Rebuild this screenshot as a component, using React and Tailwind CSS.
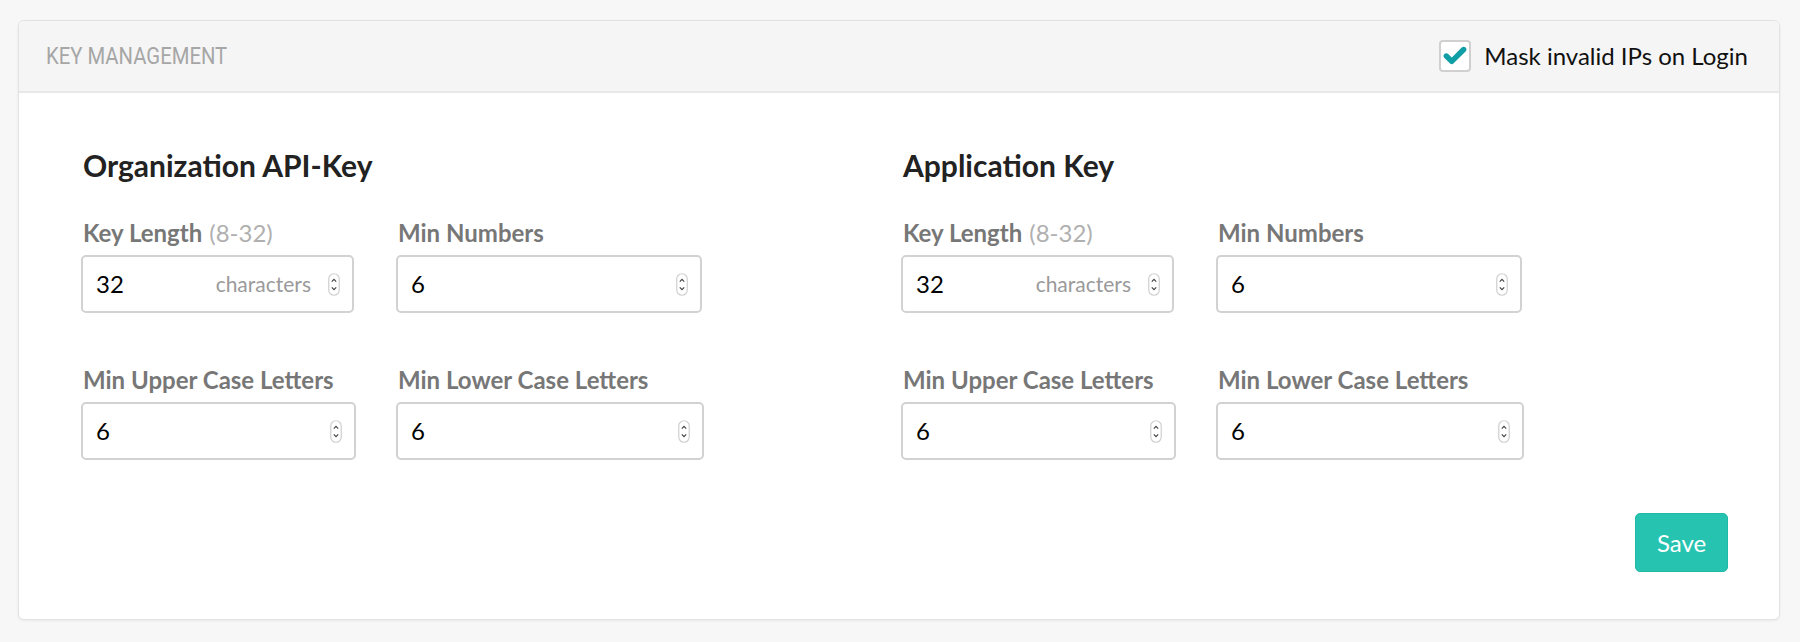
import { Check } from 'lucide-react';

const lato = { fontFamily: 'Lato, "Noto Sans", sans-serif' };

function Spinner() {
  return (
    <svg width="12" height="23" viewBox="0 0 12 23" className="shrink-0">
      <rect x="0.75" y="0.75" width="10.5" height="21.5" rx="5.25" fill="#fff" stroke="#cfcfcf" strokeWidth="1.2" />
      <path d="M3.8 8.6 L6 6.4 L8.2 8.6" fill="none" stroke="#444" strokeWidth="1.2" />
      <path d="M3.8 14.4 L6 16.6 L8.2 14.4" fill="none" stroke="#444" strokeWidth="1.2" />
    </svg>
  );
}

function NumberField({ label, hint, value, unit, width }) {
  return (
    <div className="flex flex-col" style={{ width }}>
      <div className="mb-[9px] h-[26px] pl-[2px] text-[24px] leading-[26px] whitespace-nowrap">
        <span className="font-bold text-[#777]">{label}</span>
        {hint && <span className="ml-[7px] font-normal text-[#b0b0b0]">{hint}</span>}
      </div>
      <div className="flex h-[58px] items-center rounded-[5px] border-2 border-[#d2d2d2] bg-white pl-[13px] pr-[12px]">
        <span className="flex-1 text-[24px] text-black">{value}</span>
        {unit && <span className="mr-[17px] text-[21px] text-[#9a9a9a]">{unit}</span>}
        <Spinner />
      </div>
    </div>
  );
}

function KeySection({ title }) {
  return (
    <div className="w-[820px] shrink-0">
      <h2 className="mb-[38px] h-[34px] pl-[2px] text-[30px] font-bold leading-[34px] text-[#222]">{title}</h2>
      <div className="flex gap-[42px]">
        <NumberField label="Key Length" hint="(8-32)" value="32" unit="characters" width={273} />
        <NumberField label="Min Numbers" value="6" width={306} />
      </div>
      <div className="mt-[54px] flex gap-[40px]">
        <NumberField label="Min Upper Case Letters" value="6" width={275} />
        <NumberField label="Min Lower Case Letters" value="6" width={308} />
      </div>
    </div>
  );
}

export default function App() {
  return (
    <div className="min-h-[642px] bg-[#f7f7f7] pb-[22px] pl-[18px] pr-[20px] pt-[20px]" style={lato}>
      <div className="overflow-hidden rounded-[6px] border border-[#e2e2e2] bg-white shadow-[0_1px_3px_rgba(0,0,0,0.06)]">
        <div className="flex h-[72px] items-center justify-between border-b-2 border-[#e8e8e8] bg-[#f5f5f5] pl-[27px] pr-[31px]">
          <span
            className="origin-left scale-x-[0.845] text-[24px] text-[#a6a6a6]"
            style={{ fontFamily: 'Roboto, sans-serif' }}
          >
            KEY MANAGEMENT
          </span>
          <label className="flex items-center gap-[13px]">
            <span className="flex h-[32px] w-[32px] items-center justify-center rounded-[4px] border-2 border-[#d0d0d0] bg-white">
              <Check className="h-[26px] w-[26px] text-[#109ea6]" strokeWidth={5} />
            </span>
            <span className="text-[24px] text-[#111]">Mask invalid IPs on Login</span>
          </label>
        </div>

        <div className="flex pb-[19px] pl-[62px] pt-[55px]">
          <KeySection title="Organization API-Key" />
          <KeySection title="Application Key" />
        </div>

        <div className="flex justify-end pb-[47px] pr-[51px] pt-[34px]">
          <button
            type="button"
            className="h-[59px] w-[93px] rounded-[5px] border border-[#20b9a6] bg-[#26c4b0] text-[24px] text-white"
          >
            Save
          </button>
        </div>
      </div>
    </div>
  );
}
